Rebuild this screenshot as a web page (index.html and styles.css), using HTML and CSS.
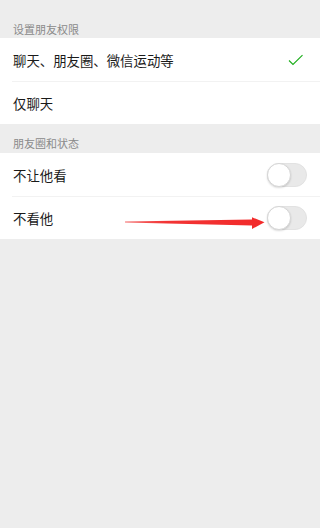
FILE: index.html
```html
<!DOCTYPE html>
<html lang="zh">
<head>
<meta charset="utf-8">
<link rel="stylesheet" href="styles.css">
</head>
<body>
<div class="page">
  <div class="section-title">设置朋友权限</div>
  <div class="group">
    <div class="row">
      <span class="label">聊天、朋友圈、微信运动等</span>
      <svg class="check" width="16" height="12" viewBox="0 0 16 12"><path d="M1 6.5 L5 10.5 L14.5 1.2" fill="none" stroke="#1aad19" stroke-width="1.1"/></svg>
    </div>
    <div class="row">
      <span class="label">仅聊天</span>
    </div>
  </div>
  <div class="section-title">朋友圈和状态</div>
  <div class="group">
    <div class="row">
      <span class="label">不让他看</span>
      <span class="switch"><span class="knob"></span></span>
    </div>
    <div class="row">
      <span class="label">不看他</span>
      <span class="switch"><span class="knob"></span></span>
    </div>
  </div>
  <svg class="arrow" width="150" height="20" viewBox="0 0 150 20">
    <defs>
      <linearGradient id="ag" x1="0" y1="0" x2="1" y2="0">
        <stop offset="0" stop-color="#f46a6a"/>
        <stop offset="0.3" stop-color="#f23434"/>
        <stop offset="1" stop-color="#f22a2a"/>
      </linearGradient>
    </defs>
    <path d="M0 9.6 L127 7.6 L127 5.3 L139.5 10.3 L127 17 L127 13.6 L0 10.6 Z" fill="url(#ag)"/>
  </svg>
</div>
</body>
</html>
```
FILE: styles.css
```css
html, body {
  margin: 0;
  padding: 0;
  background: #ededed;
}
body {
  font-family: "Noto Sans CJK SC", "Noto Sans", sans-serif;
  width: 320px;
  height: 528px;
  overflow: hidden;
}
.page {
  position: relative;
  height: 528px;
}
.section-title {
  font-size: 11px;
  color: #8a8a8a;
  line-height: 14px;
  padding: 22px 13px 2px;
}
.group + .section-title {
  padding-top: 12px;
  padding-bottom: 3px;
}
.group {
  background: #fff;
}
.row {
  display: flex;
  align-items: center;
  justify-content: space-between;
  height: 43px;
  margin-left: 12px;
  padding-right: 12px;
  padding-left: 1px;
  box-sizing: border-box;
  font-size: 13.4px;
  color: #1a1a1a;
}
.row + .row {
  border-top: 1px solid #f2f2f2;
}
.check {
  margin-right: 4px;
}
.switch {
  position: relative;
  width: 40px;
  height: 24px;
  border-radius: 12px;
  background: #e9e9e9;
  box-sizing: border-box;
  border: 1px solid #e2e2e2;
  margin-right: 1px;
}
.knob {
  position: absolute;
  left: -1px;
  top: -1px;
  width: 24px;
  height: 24px;
  border-radius: 50%;
  background: #fff;
  box-sizing: border-box;
  border: 1px solid #d6d6d6;
  box-shadow: 0 1px 2px rgba(0,0,0,0.15);
}
.arrow {
  position: absolute;
  left: 125px;
  top: 212px;
}
```
